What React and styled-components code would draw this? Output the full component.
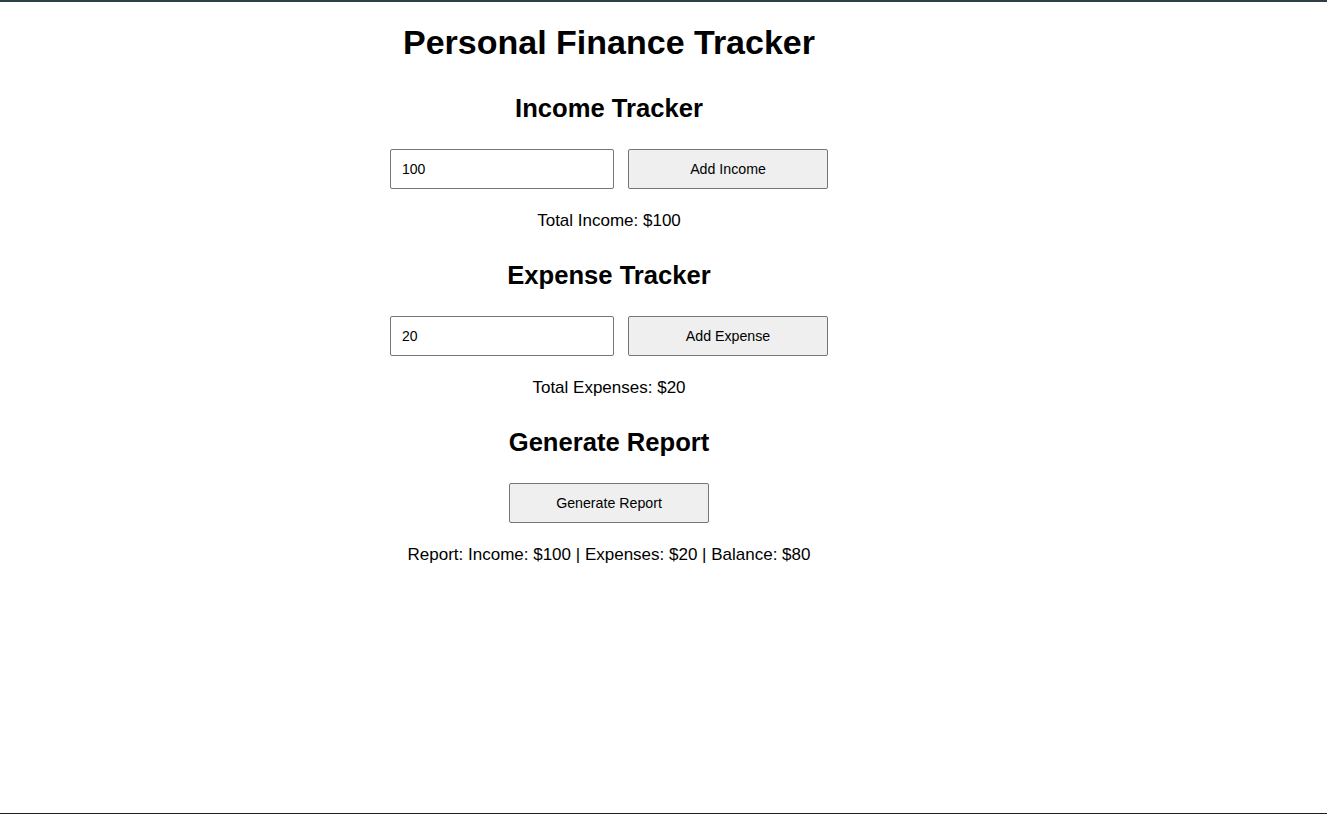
import React, { useState } from "react"
import styled, { createGlobalStyle } from "styled-components"

const GlobalStyle = createGlobalStyle`
  html, body {
    margin: 0;
    padding: 0;
    background: #fff;
  }
  body {
    font-family: "Liberation Sans", Arial, sans-serif;
    color: #000;
  }
`

const App = () => {
  const [incomeInput, setIncomeInput] = useState("100")
  const [expenseInput, setExpenseInput] = useState("20")
  const [income, setIncome] = useState(100)
  const [expenses, setExpenses] = useState(20)
  const [report, setReport] = useState("Income: $100 | Expenses: $20 | Balance: $80")

  const addIncome = () => setIncome(income + (Number(incomeInput) || 0))
  const addExpense = () => setExpenses(expenses + (Number(expenseInput) || 0))
  const generate = () =>
    setReport(`Income: $${income} | Expenses: $${expenses} | Balance: $${income - expenses}`)

  return (
    <Frame>
      <GlobalStyle />
      <Page>
        <Title>Personal Finance Tracker</Title>

        <Section>
          <Heading>Income Tracker</Heading>
          <Row>
            <Field value={incomeInput} onChange={e => setIncomeInput(e.target.value)} />
            <Button onClick={addIncome}>Add Income</Button>
          </Row>
          <Total>Total Income: ${income}</Total>
        </Section>

        <Section>
          <Heading>Expense Tracker</Heading>
          <Row>
            <Field value={expenseInput} onChange={e => setExpenseInput(e.target.value)} />
            <Button onClick={addExpense}>Add Expense</Button>
          </Row>
          <Total>Total Expenses: ${expenses}</Total>
        </Section>

        <Section>
          <Heading>Generate Report</Heading>
          <Row>
            <Button onClick={generate}>Generate Report</Button>
          </Row>
          <Total>Report: {report}</Total>
        </Section>
      </Page>
    </Frame>
  )
}
export default App

const Frame = styled.div`
  height: 100vh;
  box-sizing: border-box;
  border-top: 2px solid #2e3f45;
  border-bottom: 1px solid #1e1e1e;
  overflow: hidden;
`
const Page = styled.div`
  width: 1218px;
  display: flex;
  flex-direction: column;
  align-items: center;
  text-align: center;
`
const Title = styled.h1`
  font-size: 34px;
  font-weight: 700;
  line-height: 39px;
  margin: 21px 0 2px;
`
const Section = styled.section`
  display: flex;
  flex-direction: column;
  align-items: center;
  margin-top: 29px;
`
const Heading = styled.h2`
  font-size: 25.6px;
  font-weight: 700;
  line-height: 30px;
  margin: 0;
`
const Row = styled.div`
  display: flex;
  gap: 14px;
  margin-top: 26px;
  height: 40px;
`
const Field = styled.input`
  box-sizing: border-box;
  width: 224px;
  height: 40px;
  padding: 0 11px;
  border: 1px solid #767676;
  border-radius: 2px;
  font-family: "Liberation Sans", Arial, sans-serif;
  font-size: 14px;
  color: #000;
  outline: none;
`
const Button = styled.button`
  box-sizing: border-box;
  width: 200px;
  height: 40px;
  background: #efefef;
  border: 1px solid #767676;
  border-radius: 2px;
  font-family: "Liberation Sans", Arial, sans-serif;
  font-size: 14.2px;
  color: #000;
  cursor: pointer;
`
const Total = styled.p`
  font-size: 17px;
  line-height: 20px;
  margin: 22px 0 0;
`
